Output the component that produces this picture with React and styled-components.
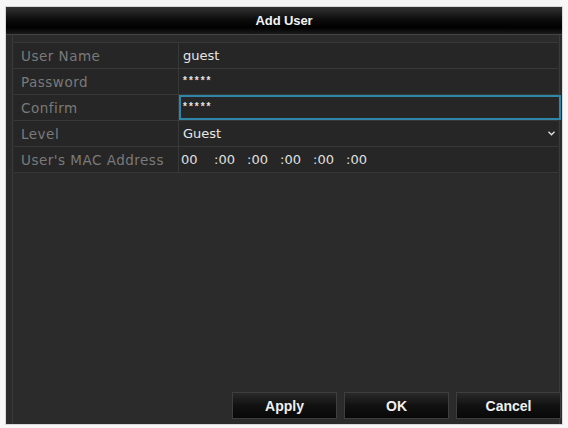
import React from 'react';
import styled, { createGlobalStyle } from 'styled-components';

const GlobalStyle = createGlobalStyle`
  html, body {
    margin: 0;
    padding: 0;
    background: #f7f7f7;
  }
  body {
    font-family: "Liberation Sans", Arial, sans-serif;
  }
`;

const Page = styled.div`
  width: 568px;
  height: 428px;
  padding: 7px 6px 0 6px;
  box-sizing: border-box;
`;

const Dialog = styled.div`
  width: 556px;
  height: 417px;
  display: flex;
  flex-direction: column;
  background: #2b2b2b;
  box-shadow: 0 0 0 1px #d8d8d8;
`;

const TitleBar = styled.div`
  height: 27px;
  display: flex;
  align-items: center;
  justify-content: center;
  background: linear-gradient(#343434 0%, #0d0d0d 45%, #000 75%, #1a1a1a 100%);
  border-bottom: 1px solid #444;
  color: #f2f2f2;
  font-size: 13px;
  font-weight: bold;
  letter-spacing: -0.1px;
`;

const Body = styled.div`
  flex: 1;
  display: flex;
  flex-direction: column;
  padding: 0 2px 0 6px;
`;

const Panel = styled.div`
  flex: 1;
  display: flex;
  flex-direction: column;
  padding: 7px 1px 5px 1px;
  border-left: 1px solid #3a3a3a;
  border-right: 1px solid #3a3a3a;
`;

const Table = styled.div`
  display: flex;
  flex-direction: column;
  border-top: 1px solid #383838;
`;

const Row = styled.div`
  height: 25px;
  display: grid;
  grid-template-columns: 165px 1fr;
  border-bottom: 1px solid #383838;
  background: #262626;
`;

const Label = styled.div`
  display: flex;
  align-items: center;
  padding-left: 7px;
  color: #7a7a7a;
  font-family: "DejaVu Sans", sans-serif;
  font-size: 13.5px;
  letter-spacing: 0.5px;
  border-right: 1px solid #383838;
`;

const Value = styled.div`
  position: relative;
  display: flex;
  align-items: center;
  padding-left: ${({ $tight }) => ($tight ? '2px' : '4px')};
  color: #e6e6e6;
  font-family: "DejaVu Sans", sans-serif;
  font-size: 13px;
  box-shadow: ${({ $focused }) =>
    $focused ? 'inset 0 0 0 2px #2f86a8' : 'none'};
  margin-right: ${({ $focused }) => ($focused ? '-3px' : '0')};
`;

const Stars = styled.span`
  font-family: "Liberation Sans", Arial, sans-serif;
  font-size: 10px;
  font-weight: bold;
  letter-spacing: 2px;
  margin-top: -3px;
`;

const Chevron = styled.svg`
  position: absolute;
  right: 3px;
  top: 10px;
`;

const MacSeg = styled.span`
  width: 33px;
  color: #e0e0e0;
`;

const Spacer = styled.div`
  flex: 1;
`;

const Buttons = styled.div`
  display: flex;
  justify-content: flex-end;
  gap: 7px;
  margin-right: -3px;
`;

const Button = styled.div`
  box-sizing: border-box;
  width: 105px;
  height: 27px;
  display: flex;
  align-items: center;
  justify-content: center;
  background: linear-gradient(#2a2a2a, #111 50%, #080808);
  border: 1px solid #3e3e3e;
  color: #f0f0f0;
  font-size: 14px;
  font-weight: bold;
`;

const fields = [
  { label: 'User Name', value: 'guest' },
  { label: 'Password', stars: true },
  { label: 'Confirm', stars: true, focused: true },
  { label: 'Level', value: 'Guest', select: true },
];

const mac = ['00', ':00', ':00', ':00', ':00', ':00'];

export default function App() {
  return (
    <>
      <GlobalStyle />
      <Page>
        <Dialog>
          <TitleBar>Add User</TitleBar>
          <Body>
            <Panel>
              <Table>
                {fields.map((f) => (
                  <Row key={f.label}>
                    <Label>{f.label}</Label>
                    <Value $focused={f.focused}>
                      {f.stars ? <Stars>*****</Stars> : f.value}
                      {f.select && (
                        <Chevron width="7" height="5" viewBox="0 0 7 5">
                          <path d="M0.5 0.8 L3.5 3.8 L6.5 0.8" stroke="#ddd" strokeWidth="1.4" fill="none" />
                        </Chevron>
                      )}
                    </Value>
                  </Row>
                ))}
                <Row>
                  <Label>User's MAC Address</Label>
                  <Value $tight>
                    {mac.map((m, i) => (
                      <MacSeg key={i}>{m}</MacSeg>
                    ))}
                  </Value>
                </Row>
              </Table>
              <Spacer />
              <Buttons>
                <Button>Apply</Button>
                <Button>OK</Button>
                <Button>Cancel</Button>
              </Buttons>
            </Panel>
          </Body>
        </Dialog>
      </Page>
    </>
  );
}
